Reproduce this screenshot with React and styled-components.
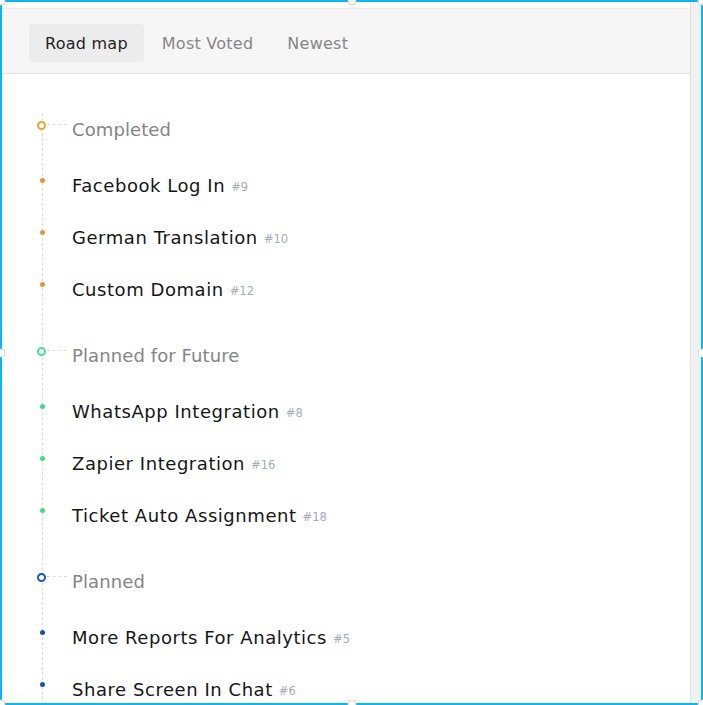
import React from "react";
import styled, { createGlobalStyle } from "styled-components";

const Global = createGlobalStyle`
  html, body { margin: 0; padding: 0; background: #fff; }
  body { font-family: "DejaVu Sans", "Open Sans", sans-serif; }
  * { box-sizing: border-box; }
`;

const Frame = styled.div`
  position: relative;
  width: 703px;
  height: 705px;
  border: 2px solid #0ab5f1;
`;

const Inner = styled.div`
  display: flex;
  width: 100%;
  height: 100%;
  overflow: hidden;
`;

const Content = styled.div`
  flex: 1;
  min-width: 0;
  padding-top: 6px;
  overflow: hidden;
  background: #fff;
`;

const ScrollTrack = styled.div`
  width: 11px;
  flex: none;
  background: #f1f1f1;
  border-left: 1px solid #e2e2e2;
`;

const TabBar = styled.div`
  display: flex;
  gap: 2px;
  padding: 15px 0 11px 27px;
  background: #f6f6f6;
  border-top: 1px solid #ececec;
  border-bottom: 1px solid #e3e3e3;
`;

const Tab = styled.div`
  height: 38px;
  display: flex;
  align-items: center;
  padding: 0 16px;
  border-radius: 4px;
  font-size: 16px;
  letter-spacing: 0.25px;
  color: ${(p) => (p.$active ? "#1e1e1e" : "#868686")};
  background: ${(p) => (p.$active ? "#ececec" : "transparent")};
`;

const Timeline = styled.div`
  margin: 39px 0 0 40px;
  padding-left: 29px;
  border-left: 1px dashed #dcdcdc;
  display: flex;
  flex-direction: column;
  gap: 24px;
`;

const Group = styled.div`
  display: flex;
  flex-direction: column;
`;

const GroupHeader = styled.div`
  position: relative;
  height: 32px;
  margin-bottom: 14px;
  display: flex;
  align-items: center;
  font-size: 18px;
  letter-spacing: 0.1px;
  color: #858585;
`;

const Ring = styled.span`
  position: absolute;
  left: -35px;
  top: 8px;
  width: 9px;
  height: 9px;
  border-radius: 50%;
  border: 2px solid ${(p) => p.$color};
  background: #fff;
  &::after {
    content: "";
    position: absolute;
    left: 8px;
    top: 1px;
    width: 20px;
    border-top: 1px dashed #dcdcdc;
  }
`;

const Item = styled.div`
  position: relative;
  height: 52px;
  display: flex;
  align-items: center;
  font-size: 18px;
  letter-spacing: 0.55px;
  color: #161616;
`;

const Dot = styled.span`
  position: absolute;
  left: -32px;
  top: 19px;
  width: 5px;
  height: 5px;
  border-radius: 50%;
  background: ${(p) => p.$color};
`;

const Num = styled.span`
  margin-left: 6px;
  margin-top: 3px;
  font-size: 11.5px;
  letter-spacing: 0;
  color: #a3acb8;
`;

const Handle = styled.span`
  position: absolute;
  width: 9px;
  height: 9px;
  border-radius: 50%;
  background: #fff;
  border: 1px solid #cfd6dc;
  transform: translate(-50%, -50%);
  left: ${(p) => p.$x};
  top: ${(p) => p.$y};
`;

const groups = [
  {
    title: "Completed",
    ring: "#f5a12b",
    dot: "#e0983a",
    items: [
      ["Facebook Log In", 9],
      ["German Translation", 10],
      ["Custom Domain", 12],
    ],
  },
  {
    title: "Planned for Future",
    ring: "#46e08f",
    dot: "#43d985",
    items: [
      ["WhatsApp Integration", 8],
      ["Zapier Integration", 16],
      ["Ticket Auto Assignment", 18],
    ],
  },
  {
    title: "Planned",
    ring: "#1658c9",
    dot: "#1b4fb3",
    items: [
      ["More Reports For Analytics", 5],
      ["Share Screen In Chat", 6],
    ],
  },
];

const handles = [
  ["-1px", "-1px"],
  ["50%", "-1px"],
  ["calc(100% + 1px)", "-1px"],
  ["-1px", "50%"],
  ["calc(100% + 1px)", "50%"],
  ["-1px", "calc(100% + 1px)"],
  ["50%", "calc(100% + 1px)"],
  ["calc(100% + 1px)", "calc(100% + 1px)"],
];

export default function App() {
  return (
    <>
      <Global />
      <Frame>
        <Inner>
          <Content>
            <TabBar>
              <Tab $active>Road map</Tab>
              <Tab>Most Voted</Tab>
              <Tab>Newest</Tab>
            </TabBar>
            <Timeline>
              {groups.map((g) => (
                <Group key={g.title}>
                  <GroupHeader>
                    <Ring $color={g.ring} />
                    {g.title}
                  </GroupHeader>
                  {g.items.map(([name, n]) => (
                    <Item key={name}>
                      <Dot $color={g.dot} />
                      {name}
                      <Num>#{n}</Num>
                    </Item>
                  ))}
                </Group>
              ))}
            </Timeline>
          </Content>
          <ScrollTrack />
        </Inner>
        {handles.map(([x, y], i) => (
          <Handle key={i} $x={x} $y={y} />
        ))}
      </Frame>
    </>
  );
}
